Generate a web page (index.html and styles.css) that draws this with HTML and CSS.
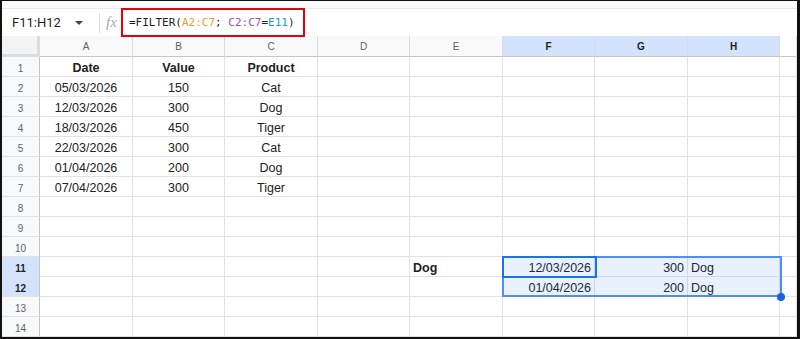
FILE: index.html
```html
<!DOCTYPE html>
<html lang="en">

<head>
    <meta charset="UTF-8">
    <title>FILTER example</title>
    <link rel="stylesheet" href="styles.css">
</head>

<body>
    <div class="sheet">
        <div class="top-strip"></div>

        <!-- Formula bar -->
        <div class="formula-bar">
            <div class="name-box">
                <span>F11:H12</span>
                <span class="caret"></span>
            </div>
            <div class="fx">fx</div>
            <div class="formula">=FILTER(<span class="ref-a">A2:C7</span>; <span class="ref-c">C2:C7</span>=<span class="ref-e">E11</span>)</div>
        </div>

        <!-- Grid -->
        <div class="grid-wrap">
            <div class="row col-head">
                <div class="corner"></div>
                <div>A</div><div>B</div><div>C</div><div>D</div><div>E</div>
                <div class="sel">F</div><div class="sel">G</div><div class="sel">H</div>
                <div></div>
            </div>
            <div class="row">
                <div class="rh">1</div>
                <div class="ctr b">Date</div><div class="ctr b">Value</div><div class="ctr b">Product</div>
                <div></div><div></div><div></div><div></div><div></div><div></div>
            </div>
            <div class="row">
                <div class="rh">2</div>
                <div class="ctr">05/03/2026</div><div class="ctr">150</div><div class="ctr">Cat</div>
                <div></div><div></div><div></div><div></div><div></div><div></div>
            </div>
            <div class="row">
                <div class="rh">3</div>
                <div class="ctr">12/03/2026</div><div class="ctr">300</div><div class="ctr">Dog</div>
                <div></div><div></div><div></div><div></div><div></div><div></div>
            </div>
            <div class="row">
                <div class="rh">4</div>
                <div class="ctr">18/03/2026</div><div class="ctr">450</div><div class="ctr">Tiger</div>
                <div></div><div></div><div></div><div></div><div></div><div></div>
            </div>
            <div class="row">
                <div class="rh">5</div>
                <div class="ctr">22/03/2026</div><div class="ctr">300</div><div class="ctr">Cat</div>
                <div></div><div></div><div></div><div></div><div></div><div></div>
            </div>
            <div class="row">
                <div class="rh">6</div>
                <div class="ctr">01/04/2026</div><div class="ctr">200</div><div class="ctr">Dog</div>
                <div></div><div></div><div></div><div></div><div></div><div></div>
            </div>
            <div class="row">
                <div class="rh">7</div>
                <div class="ctr">07/04/2026</div><div class="ctr">300</div><div class="ctr">Tiger</div>
                <div></div><div></div><div></div><div></div><div></div><div></div>
            </div>
            <div class="row">
                <div class="rh">8</div>
                <div></div><div></div><div></div><div></div><div></div><div></div><div></div><div></div><div></div>
            </div>
            <div class="row">
                <div class="rh">9</div>
                <div></div><div></div><div></div><div></div><div></div><div></div><div></div><div></div><div></div>
            </div>
            <div class="row">
                <div class="rh">10</div>
                <div></div><div></div><div></div><div></div><div></div><div></div><div></div><div></div><div></div>
            </div>
            <div class="row">
                <div class="rh sel">11</div>
                <div></div><div></div><div></div><div></div>
                <div class="b">Dog</div>
                <div class="num">12/03/2026</div><div class="num">300</div><div>Dog</div>
                <div></div>
            </div>
            <div class="row">
                <div class="rh sel">12</div>
                <div></div><div></div><div></div><div></div><div></div>
                <div class="num">01/04/2026</div><div class="num">200</div><div>Dog</div>
                <div></div>
            </div>
            <div class="row">
                <div class="rh">13</div>
                <div></div><div></div><div></div><div></div><div></div><div></div><div></div><div></div><div></div>
            </div>
            <div class="row">
                <div class="rh">14</div>
                <div></div><div></div><div></div><div></div><div></div><div></div><div></div><div></div><div></div>
            </div>

            <!-- Selected range F11:H12 -->
            <div class="selection"></div>
            <div class="active-cell"></div>
            <div class="fill-handle"></div>
        </div>
    </div>
</body>

</html>
```

FILE: styles.css
```css
/* Reset */
* {
    box-sizing: border-box;
    margin: 0;
    padding: 0;
}

body {
    width: 800px;
    height: 339px;
    overflow: hidden;
    background: #fff;
    font-family: Arial, "Liberation Sans", sans-serif;
}

/* Outer frame */
.sheet {
    width: 800px;
    height: 339px;
    border-style: solid;
    border-color: #111;
    border-width: 1px 3px 2px 2px;
    display: flex;
    flex-direction: column;
    overflow: hidden;
}

.top-strip {
    height: 7px;
    background: #f8fafd;
}

/* Formula bar */
.formula-bar {
    height: 28px;
    display: flex;
    align-items: center;
    border-top: 1px solid #e8eaed;
    background: #fff;
}

.name-box {
    width: 98px;
    height: 20px;
    display: flex;
    align-items: center;
    justify-content: space-between;
    padding: 0 16px 0 10px;
    border-right: 1px solid #dadce0;
    font-family: Roboto, Arial, sans-serif;
    font-size: 13px;
    color: #1f1f1f;
}

.caret {
    width: 0;
    height: 0;
    border-left: 4px solid transparent;
    border-right: 4px solid transparent;
    border-top: 4px solid #444;
}

.fx {
    width: 21px;
    padding-left: 6px;
    font-family: "Liberation Serif", serif;
    font-style: italic;
    font-size: 15px;
    color: #a7abb0;
}

.formula {
    position: relative;
    z-index: 2;
    width: 184px;
    height: 29px;
    border: 2px solid #e3000f;
    padding-left: 6px;
    font-family: "DejaVu Sans Mono", "Liberation Mono", monospace;
    font-size: 11px;
    line-height: 25px;
    color: #1f1f1f;
    white-space: nowrap;
}

.ref-a { color: #f29b1d; }
.ref-c { color: #9b4fb6; }
.ref-e { color: #21a1c9; }

/* Grid */
.grid-wrap {
    position: relative;
    flex: 1;
}

.row {
    display: grid;
    grid-template-columns: 38px 93px 92px 93px 92px 93px 92px 93px 92px 1fr;
    height: 20px;
}

.row > div {
    border-right: 1px solid #e2e2e2;
    border-bottom: 1px solid #e2e2e2;
    padding: 0 3px;
    font-size: 12.5px;
    line-height: 23px;
    color: #222;
    white-space: nowrap;
    overflow: hidden;
}

.col-head {
    height: 21px;
}

.col-head > div {
    text-align: center;
    font-size: 10px;
    line-height: 21px;
    color: #5f6368;
    background: #f8f9fa;
    border-right-color: #dadce0;
    border-bottom-color: #c4c7c5;
}

.col-head > div:last-child {
    background: #fff;
}

.col-head .corner {
    background: #f1f3f4;
    border-right: 3px solid #dadce0;
    border-bottom: 3px solid #dadce0;
}

.row > .rh {
    text-align: center;
    font-size: 10px;
    color: #5f6368;
    background: #f8f9fa;
    border-right-color: #c4c7c5;
    padding: 0;
}

.row > .sel {
    background: #d3e3fd;
    color: #1f1f1f;
    font-weight: bold;
}

.ctr { text-align: center; }
.num { text-align: right; }
.b { font-weight: bold; }

/* Selection overlay */
.selection {
    position: absolute;
    left: 500px;
    top: 220px;
    width: 280px;
    height: 41px;
    border: 2px solid #4f8ef2;
    background: rgba(26, 115, 232, 0.1);
}

.active-cell {
    position: absolute;
    left: 500px;
    top: 220px;
    width: 95px;
    height: 22px;
    border: 2px solid #1a73e8;
}

.fill-handle {
    position: absolute;
    left: 775px;
    top: 257px;
    width: 8px;
    height: 8px;
    border-radius: 50%;
    background: #1a62d6;
}
```
